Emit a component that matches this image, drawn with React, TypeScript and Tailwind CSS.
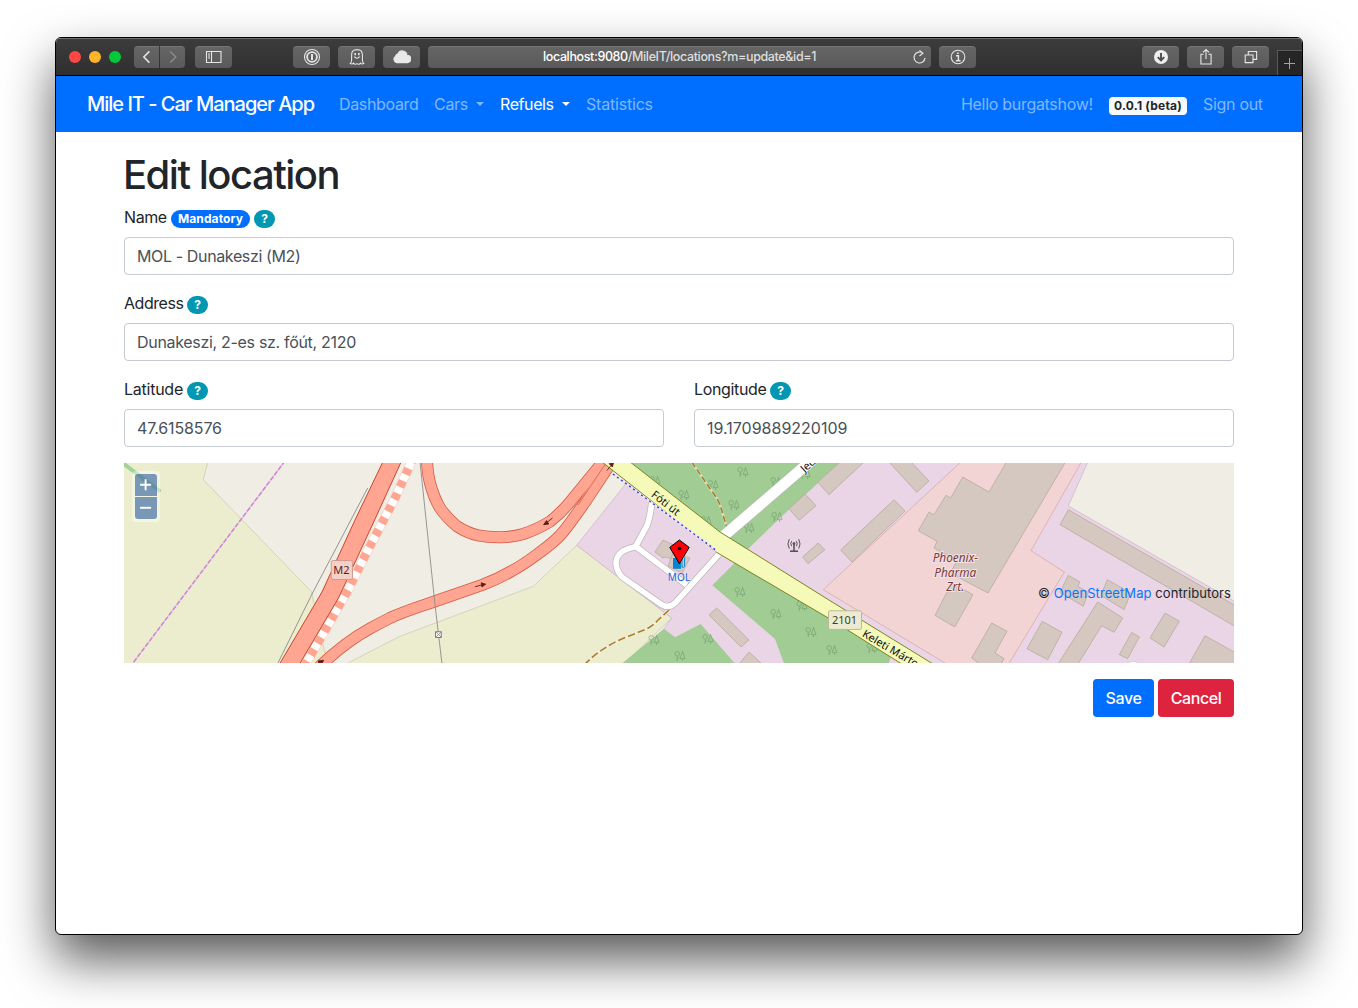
import React from "react";

const buildings = [
  "663,540 678,547 671,559 666,557 663,558 655,552",
  "673,553 690,558 682,573 668,566",
  "716.7,608 709,615 741,647 749,640",
  "749,652 739,664 762,664",
  "805,494 789,508.7 799,520.3 816,505.7",
  "818,543 802.7,557 808,563.7 825,549.7",
  "840,462 817.7,482 829,494.7 864,462",
  "889,462 916.7,492.3 929,481 911,462",
  "894,499.7 840.7,550 852,562 905,511",
  "1006.5,462 989,492 962.7,477 950.7,498 946,495.3 934,514.7 929,512 918.3,530.7 937,541.3 934,548 957,561 950,573 988,593 1065.5,462",
  "951.7,583 973,594.7 954.7,627 935,615.3",
  "991.7,623 1007,631.3 995,653 1004,658.7 1001,664 980,664 971.7,658",
  "1068.3,509.7 1060,524.7 1236,627 1236,606",
  "1068.3,575.3 1080,582 1077.7,586.3 1088.3,592.3 1083.3,606.3 1060,592.3",
  "1107.3,579.7 1130.7,593 1124,609.7 1101,595.3",
  "1097.7,602 1122.7,618 1114,632.3 1101.7,625.7 1078,664 1058,664",
  "1042.3,621.3 1062,632.3 1047.7,659.7 1027,648.7",
  "1131.7,632.3 1139.3,637 1127.7,658.7 1119.3,654.7",
  "1165,613 1179.3,621.3 1164,647 1150,638",
  "1205,635.7 1236,653 1236,664 1189,664",
];

const trees: [number, number][] = [
  [743, 472], [776, 482], [713, 485], [684, 495], [734, 505], [706, 521], [777, 517], [749, 528],
  [655, 481], [740, 592], [776, 614], [802, 606], [811, 632], [654, 640], [708, 639], [680, 656],
  [832, 650], [872, 648], [805, 474],
];

const ramp =
  "M318 668 Q345 642 370 628.5 Q380 623 390 618 C405 611 420 606.5 433 602 L483 584.7 C494 580.5 503 576 511.7 571 C521 566 529 560.5 536.7 554.7 C546 548 557 540 563.5 531.5 C572 521 580 509 586.7 499.7 L611 463 L616 456";
const loop =
  "M426.5 456 L427.3 466 Q428 476 430 483 Q434 498 440 508 Q446 517 456.7 526 Q467 533 478 535.3 Q489 537.5 501.7 537.2 Q513 537 523.3 534 Q538 529 550 521.5 Q561 513 570 502 L602 463 L608 456";
const service =
  "M651.7 503 Q650 518 646.7 526 L635.7 546.5 L686.7 585 M635.7 546.5 Q629 548 623 551 Q616 556 616 563 Q616 570 622 577 L661.7 604.7 Q669 609 675 603 L720 553";

function Tree({ x, y }: { x: number; y: number }) {
  return (
    <g transform={`translate(${x} ${y})`}>
      <circle cx="-2.8" cy="-2.2" r="2.3" />
      <path d="M-2.8 0.2V5M-2.8 3.2L-1 1.2M2.6 5V2.6M0.2 2.6L2.6 -4.6L5 2.6Z" />
    </g>
  );
}

function LocationMap() {
  return (
    <svg className="block h-[200px] w-full" viewBox="124 463 1110 200" fontFamily="'Noto Sans', sans-serif">
      <rect x="124" y="463" width="1110" height="200" fill="#f0ede5" />
      <g stroke="#c9c9ad" strokeWidth=".7" fill="#ecedcf">
        <path d="M120 460H208.3L203.3 479.7L311.7 592L313.5 601L323 645L329 666H120Z" />
        <path d="M346 664L400 636.3L533.3 586.3L576.7 545.3L671.7 618L622 666H340Z" />
      </g>
      <path d="M625 484.7L576.7 545.3L671.7 618L664 628.7L680 670H1240V460H626Z" fill="#ead5e6" stroke="#c9b6c6" strokeWidth=".7" />
      <path d="M1088.7 460L1068.3 506L1240 604.5V460Z" fill="#f0ede5" stroke="#c9b6c6" strokeWidth=".7" />
      <path d="M963 460L823.3 589.7L950 666H1007.5L1064.3 572L1031 550.7L1082.5 460Z" fill="#f3d4d4" stroke="#d9a9a9" strokeWidth=".8" />
      <g fill="#a1cc94">
        <path d="M610 460H843L780 518L748 549L730 545Z" />
        <path d="M712.3 585.3L733 564.7L740 555L891.5 654L888 666H785L775 639Z" />
        <path d="M664 628.7L675 637.3L700.7 624L737 666H619Z" />
      </g>
      <path d="M120 461L159 490.5" stroke="#a1d399" strokeWidth="4" strokeLinecap="round" />
      <g fill="none" stroke="#6f9c68" strokeWidth=".8" opacity=".75">
        {trees.map(([x, y]) => <Tree key={`${x}-${y}`} x={x} y={y} />)}
      </g>
      <g fill="#d4c8c1" stroke="#b9a99c" strokeWidth=".8">
        {buildings.map((points) => <polygon key={points} points={points} />)}
      </g>

      <g fill="none">
        <path d="M285 461L133 663" stroke="#e8c7e8" strokeWidth="1.8" />
        <path d="M285 461L133 663" stroke="#cb86ca" strokeWidth="1.4" strokeDasharray="4.5 2" />
        <path d="M367.7 488L312 594L277.5 664" stroke="#8a8a84" strokeWidth=".9" />

        <path d="M691.7 462L711 490Q719 500 721 508L726.7 527" stroke="#cfe0bf" strokeWidth="2.6" />
        <path d="M691.7 462L711 490Q719 500 721 508L726.7 527" stroke="#a97f2c" strokeWidth="1.6" strokeDasharray="6 3" />
        <path d="M669 610L658 620Q652 627 644 630L620 639.7Q600 649 585 664" stroke="#f4eedd" strokeWidth="2.8" />
        <path d="M669 610L658 620Q652 627 644 630L620 639.7Q600 649 585 664" stroke="#a97f2c" strokeWidth="1.6" strokeDasharray="7.5 3" />

        <path d="M414 456L395.5 497L368 550L348 590L331 620L304 667" stroke="#fbd3c8" strokeWidth="9.6" />
        <path d="M414 456L395.5 497L368 550L348 590L331 620L304 667" stroke="#fff" strokeWidth="8" />
        <path d="M414 456L395.5 497L368 550L348 590L331 620L304 667" stroke="#ffa591" strokeWidth="8.6" strokeDasharray="6.8 6.8" />

        <path d={service} stroke="#bdb3bb" strokeWidth="7" />
        <path d={service} stroke="#fff" strokeWidth="5.6" />
        <path d="M723 537L812 460" stroke="#b9b9b3" strokeWidth="12" />
        <path d="M719 540L812 460" stroke="#fff" strokeWidth="10.8" />

        <path d={loop} stroke="#d35a43" strokeWidth="12" />
        <path d={ramp} stroke="#d35a43" strokeWidth="12" />
        <path d={loop} stroke="#ffa591" strokeWidth="10.4" />
        <path d={ramp} stroke="#ffa591" strokeWidth="10.4" />
        <path d="M578 505L606 463" stroke="#d35a43" strokeWidth=".8" />
      </g>
      <path d="M383.8 460L355 520L322 592L279 665H299L338.5 598L376 517L402 460Z" fill="#ffa591" stroke="#c9452e" strokeWidth="1" />
      <path d="M597 458L718 553.2L830 619L905 666L938 667L830 600.7L720 532L625 458Z" fill="#f6fab9" stroke="#7b8420" strokeWidth="1" />
      <path d="M613 474L717 551" stroke="#eee8f4" strokeWidth="2.2" />
      <path d="M613 474L717 551" stroke="#3838ee" strokeWidth="1.4" strokeDasharray="2 3" />
      <path d="M420 462L435 604.7L442 664" fill="none" stroke="#8c8c86" strokeWidth=".9" />
      <rect x="435.6" y="631.8" width="5.6" height="5.6" fill="#fff" stroke="#6d6d6d" strokeWidth=".9" />
      <path d="M436 632.2L441 637M441 632.2L436 637" stroke="#6d6d6d" strokeWidth=".7" />
      <ellipse cx="1133" cy="664" rx="6" ry="2.4" fill="#fff" stroke="#bbb" strokeWidth=".6" />

      <g fill="#5b1d14" stroke="#5b1d14" strokeWidth=".9">
        <path d="M552.5 518L546 523.2M546.6 520.6L543.6 524.7L548.7 524Z" />
        <path d="M475 586.8L482 584.8M481.2 582.8L485.6 584.2L482 587Z" />
        <path d="M607 470.5L611 465.5M609.2 463.7L613.4 463L612.4 467Z" />
        <path d="M314 667L319 662M318 661L323.6 660.2L321.6 664.4Z" />
      </g>

      <rect x="331.3" y="560.5" width="21.2" height="19" rx="2" fill="#f3d0c8" stroke="#d29a8e" />
      <text x="341.5" y="574" textAnchor="middle" fontSize="11" fill="#5c1e16">M2</text>
      <rect x="828.5" y="610.8" width="33" height="18.6" rx="1.5" fill="#ecebd2" stroke="#bbb98f" />
      <text x="844.5" y="624" textAnchor="middle" fontSize="11" fill="#3f4113">2101</text>

      <g fontSize="11" fill="#111" stroke="#f6fab9" strokeWidth="1" paintOrder="stroke">
        <text transform="translate(650.5 496) rotate(38)">Fóti út</text>
        <text transform="translate(861.5 636) rotate(30.5)">Keleti Márto</text>
        <text transform="translate(804.5 473) rotate(-41)" stroke="#fff">Jed</text>
      </g>
      <g fontSize="11.8" fontStyle="italic" fill="#733a3f" textAnchor="middle" stroke="#f6e3e2" strokeWidth="1.8" paintOrder="stroke">
        <text x="955.3" y="562">Phoenix-</text>
        <text x="955.3" y="576.5">Pharma</text>
        <text x="955.3" y="590.8">Zrt.</text>
      </g>

      <g fill="none" stroke="#555" strokeWidth="1">
        <path d="M794 544V551" strokeWidth="1.6" />
        <path d="M790 551.2H798" strokeWidth="1.6" />
        <path d="M791.6 541.2Q790 543.7 791.6 546.2M796.4 541.2Q798 543.7 796.4 546.2M789.3 539.2Q786.6 544 789.3 548.6M798.7 539.2Q801.4 544 798.7 548.6" />
        <circle cx="794" cy="543.6" r="1" fill="#555" />
      </g>
      <g>
        <rect x="673" y="558" width="8" height="10.8" fill="#0385d6" />
        <path d="M682 567.2V559M684.6 557.5V566.5Q683.5 568 682 567" fill="none" stroke="#0385d6" strokeWidth="1" />
        <text x="679" y="580.8" textAnchor="middle" fontSize="10" letterSpacing=".2" fill="#1467d8" stroke="#f3e7f1" strokeWidth="1.2" paintOrder="stroke">MOL</text>
        <path d="M679.4 540L689.2 547.4L679.4 563.7L669.8 547.4Z" fill="#fb0007" stroke="#000" strokeWidth="1" strokeLinejoin="round" />
        <circle cx="679.4" cy="548.4" r="1.8" fill="#000" />
      </g>
    </svg>
  );
}

function ToolButton({ children, className = "w-[37px]" }: { children?: React.ReactNode; className?: string }) {
  return (
    <div className={`flex h-[22px] shrink-0 items-center justify-center rounded-[4px] border-t border-[#747474] bg-linear-to-b from-[#656565] to-[#5a5a5a] pb-px ${className}`}>
      {children}
    </div>
  );
}

function Icon({ children, size = 18 }: { children: React.ReactNode; size?: number }) {
  return (
    <svg width={size} height={size} viewBox="0 0 18 18" fill="none" stroke="#e6e6e6" strokeWidth="1.1" className="shrink-0">
      {children}
    </svg>
  );
}

function Toolbar() {
  return (
    <div className="flex h-[38px] border-t border-b border-t-[#6a6a6a] border-b-black bg-linear-to-b from-[#3c3c3c] to-[#2f2f2f] pl-[13px]">
      <div className="flex w-full items-center">
        <div className="flex w-[65px] gap-2">
          <i className="h-3 w-3 rounded-full bg-[#ff4744]" />
          <i className="h-3 w-3 rounded-full bg-[#ffb429]" />
          <i className="h-3 w-3 rounded-full bg-[#03c93b]" />
        </div>
        <div className="flex gap-px">
          <ToolButton className="w-[25px] rounded-r-none">
            <Icon><path d="M11.4 3.4L5.8 9L11.4 14.6" strokeWidth="1.5" /></Icon>
          </ToolButton>
          <ToolButton className="w-[25px] rounded-l-none">
            <Icon><path d="M6.2 3.4L11.8 9L6.2 14.6" stroke="#8b8b8b" strokeWidth="1.4" /></Icon>
          </ToolButton>
        </div>
        <div className="ml-[10px] flex">
          <ToolButton>
            <Icon><path d="M1.5 3.5H16V14.5H1.5ZM6.5 3.5V14.5M3 6H5M3 8H5M3 10H5" /></Icon>
          </ToolButton>
        </div>
        <div className="ml-[61px] flex gap-2">
          <ToolButton>
            <Icon><circle cx="9" cy="9" r="7.5" /><circle cx="9" cy="9" r="4.9" strokeWidth="1.8" /><path d="M9 6V12" strokeWidth="2" /></Icon>
          </ToolButton>
          <ToolButton>
            <Icon>
              <path d="M2.2 15.6Q3.6 14.5 3.6 12V7Q3.6 1.6 9 1.6T14.4 7V12Q14.4 14.5 15.8 15.6Q13.6 16.6 12.4 15.1Q11 17.2 9 15.6Q7 17.2 5.6 15.1Q4.4 16.6 2.2 15.6ZM6.3 8.7Q9 11.8 11.7 8.7" />
              <path d="M7.2 5V7.2M10.8 5V7.2" strokeWidth="1.6" />
            </Icon>
          </ToolButton>
          <ToolButton>
            <Icon><path d="M3.6 14.6A3.5 3.5 0 0 1 2.6 8.2A2.9 2.9 0 0 1 5 5.8A4.7 4.7 0 0 1 14 7.2A3.7 3.7 0 0 1 14.4 14.6Z" fill="#e9e9e9" /></Icon>
          </ToolButton>
          <ToolButton className="relative w-[503px]">
            <span className="text-[12.5px] leading-4 font-medium tracking-[-0.37px] text-white">
              localhost:9080<span className="text-[#dedede]">/MileIT/locations?m=update&amp;id=1</span>
            </span>
            <span className="absolute right-[3px]">
              <Icon size={17}><path d="M12.8 4.6A5.8 5.8 0 1 0 14.8 9.4M9 1.4L12.6 4.5L9 7.4" strokeWidth="1.2" /></Icon>
            </span>
          </ToolButton>
          <ToolButton>
            <Icon><circle cx="9" cy="9" r="6.8" /><path d="M7 7.8H9.4V12.6M6.8 12.7H11.6" strokeWidth="1.5" /><path d="M8.9 4.4V6" strokeWidth="1.7" /></Icon>
          </ToolButton>
        </div>
        <div className="ml-auto flex gap-2">
          <ToolButton>
            <Icon><circle cx="9" cy="9" r="7" fill="#eee" stroke="none" /><path d="M9 5V12.2M5.8 9.2L9 12.4L12.2 9.2" stroke="#4a4a4a" strokeWidth="1.9" /></Icon>
          </ToolButton>
          <ToolButton>
            <Icon><path d="M6.5 6.2H3.9V16H14.1V6.2H11.5M9 11V1.6M6 4.4L9 1.5L12 4.4" /></Icon>
          </ToolButton>
          <ToolButton>
            <Icon><path d="M3.2 7H11V14.6H3.2ZM6.3 7V3.5H14.6V11.4H11" /></Icon>
          </ToolButton>
        </div>
        <div className="ml-2 flex h-[25px] w-[25px] items-center justify-center self-end border-t border-l border-[#5a5a5a] bg-[#252525] pr-px">
          <svg width="12" height="12" viewBox="0 0 12 12" stroke="#a3a3a3"><path d="M0 6.5H11M5.5 1V12" /></svg>
        </div>
      </div>
    </div>
  );
}

function Caret() {
  return <i className="ml-2 h-0 w-0 border-x-[4px] border-t-[4px] border-x-transparent border-t-current" />;
}

function Navbar() {
  return (
    <nav className="flex h-14 items-center bg-[#006fff] pr-[39px] pl-[31px] whitespace-nowrap text-[#80b7ff]">
      <div className="w-[252px] text-[20px] font-medium tracking-[-1px] text-white">Mile IT - Car Manager App</div>
      <div className="flex w-[95px] tracking-[-0.35px]">Dashboard</div>
      <div className="flex w-[66px] items-center tracking-[-0.3px]"><span className="w-[34px]">Cars</span><Caret /></div>
      <div className="flex w-[86px] items-center tracking-[-0.4px] text-white"><span className="w-[54px]">Refuels</span><Caret /></div>
      <div className="tracking-[-0.2px]">Statistics</div>
      <div className="ml-auto flex items-center">
        <span className="w-[148px] tracking-[-0.3px]">Hello burgatshow!</span>
        <span className="mt-[3px] flex h-[18px] w-[78px] items-center justify-center rounded-[4px] bg-[#f8f9fa] text-[12px] font-bold tracking-[0.2px] text-[#212529]">0.0.1 (beta)</span>
        <span className="ml-4 w-[60px] tracking-[-0.3px]">Sign out</span>
      </div>
    </nav>
  );
}

function Help() {
  return <span className="mt-[3px] ml-1 flex h-[18px] w-[21px] items-center justify-center rounded-full bg-[#0097b2] text-[12px] font-bold text-white">?</span>;
}

interface FieldProps {
  label: string;
  value: string;
  mandatory?: boolean;
  labelClass: string;
  valueClass: string;
}

function Field({ label, value, mandatory = false, labelClass, valueClass }: FieldProps) {
  return (
    <div className="mb-4 flex-1">
      <div className="mb-2 flex h-6 items-center text-[#212529]">
        <span className={labelClass}>{label}</span>
        {mandatory && (
          <span className="mt-[3px] ml-[5px] flex h-[18px] w-[79px] items-center justify-center rounded-full bg-[#006fff] text-[12px] font-bold tracking-[0.1px] text-white">Mandatory</span>
        )}
        <Help />
      </div>
      <div className="flex h-[38px] items-center rounded-[4px] border border-[#c5cbd1] px-3 text-[#495057]">
        <span className={valueClass}>{value}</span>
      </div>
    </div>
  );
}

export default function App() {
  return (
    <div className="h-[1008px] w-[1358px] overflow-hidden bg-white px-[55px] pt-[37px] font-['Inter','Liberation_Sans',sans-serif] text-[16px] leading-6">
      <div className="h-[898px] w-[1248px] overflow-hidden rounded-[6px] border border-black bg-white shadow-[0_25px_50px_rgba(0,0,0,0.65)]">
        <Toolbar />
        <Navbar />
        <main className="px-[68px] pt-[17px]">
          <h1 className="mb-2 -ml-px h-12 text-[40px] leading-[51px] font-medium tracking-[-1.5px] text-[#212529]">Edit location</h1>
          <Field label="Name" value="MOL - Dunakeszi (M2)" mandatory labelClass="w-[42px] tracking-[-0.4px]" valueClass="tracking-[-0.37px]" />
          <Field label="Address" value="Dunakeszi, 2-es sz. főút, 2120" labelClass="w-[59px] tracking-[-0.45px]" valueClass="tracking-[-0.31px]" />
          <div className="flex gap-[30px]">
            <Field label="Latitude" value="47.6158576" labelClass="w-[59px] tracking-[-0.25px]" valueClass="tracking-[-0.12px]" />
            <Field label="Longitude" value="19.1709889220109" labelClass="w-[72px] tracking-[-0.35px]" valueClass="tracking-[0px]" />
          </div>
          <div className="relative h-[200px] overflow-hidden">
            <LocationMap />
            <div className="absolute top-2 left-2 flex flex-col gap-px rounded-[4px] bg-white/40 p-[3px]">
              {["M5.5 11H16.5M11 5.5V16.5", "M5.5 11H16.5"].map((d, i) => (
                <div key={d} className={i === 0 ? "h-[22px] w-[22px] rounded-t-[3px] bg-[#003c88]/50" : "h-[22px] w-[22px] rounded-b-[3px] bg-[#003c88]/50"}>
                  <svg width="22" height="22" viewBox="0.4 0.2 22 22" stroke="#fff" strokeWidth="1.9"><path d={d} /></svg>
                </div>
              ))}
            </div>
            <div className="absolute top-[120px] right-[3px] text-[13px] leading-[21px] tracking-[0.08px] whitespace-nowrap text-[#212529]">
              © <span className="text-[#0a74ff]">OpenStreetMap</span> contributors
            </div>
          </div>
          <div className="mt-4 flex justify-end gap-1 font-medium tracking-[-0.4px] text-white">
            <button className="h-[38px] w-[61px] rounded-[4px] bg-[#006fff]">Save</button>
            <button className="h-[38px] w-[76px] rounded-[4px] bg-[#de233f]">Cancel</button>
          </div>
        </main>
      </div>
    </div>
  );
}
